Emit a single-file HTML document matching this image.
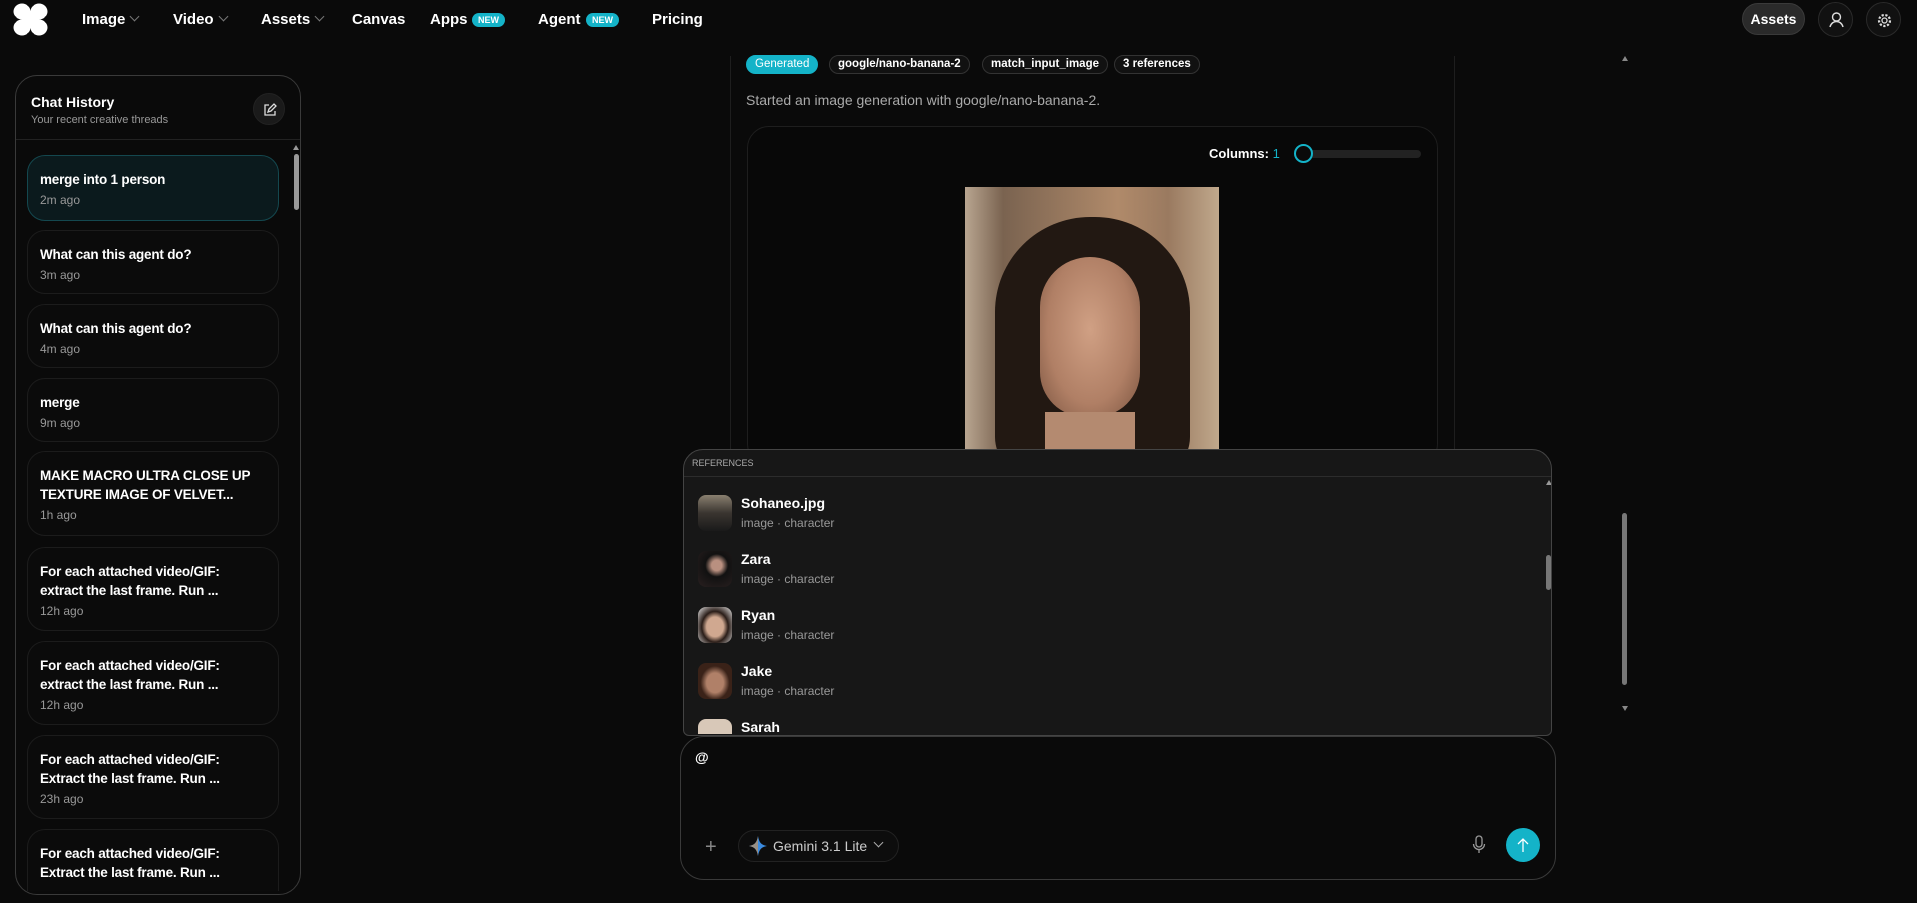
<!DOCTYPE html>
<html><head><meta charset="utf-8"><style>
*{box-sizing:border-box;margin:0;padding:0}
body{width:1917px;height:903px;background:#0a0a0a;font-family:"Liberation Sans",sans-serif;color:#fff;position:relative;overflow:hidden}
.a{position:absolute}
.nav{font-size:15px;font-weight:bold;top:11px}
.chev{display:inline-block;width:7px;height:7px;border-right:1px solid #777;border-bottom:1px solid #777;transform:rotate(45deg);margin-left:6px;position:relative;top:-4px}
.new{background:#14b3c8;color:#fff;font-size:9px;font-weight:bold;border-radius:8px;padding:2px 6px;top:13px}
.item{left:27px;width:252px;border:1px solid #1c1c1c;border-radius:18px;background:#0b0b0b;padding:14px 12px 0 12px}
.item .t{font-size:13.5px;font-weight:bold;line-height:19px;letter-spacing:-0.2px}
.item .s{font-size:12px;color:#999;margin-top:4px}
.tag{top:55px;height:19px;border:1px solid #333;border-radius:10px;font-size:11.5px;font-weight:bold;line-height:17px;padding:0 8px;background:#111}
.ref{left:698px;width:300px;height:40px}
.av{position:absolute;left:0;top:0;width:34px;height:36px;border-radius:8px}
.rn{position:absolute;left:43px;top:0;font-size:14px;font-weight:bold;white-space:nowrap}
.rs{position:absolute;left:43px;top:21px;font-size:12px;color:#999;white-space:nowrap}
</style></head><body>
<svg class="a" style="left:13px;top:3px" width="35" height="33" viewBox="0 0 35 33"><g fill="#fff"><ellipse cx="9" cy="8.5" rx="8.5" ry="8"/><ellipse cx="26" cy="8.5" rx="8.5" ry="8"/><ellipse cx="9" cy="24.5" rx="8.5" ry="8"/><ellipse cx="26" cy="24.5" rx="8.5" ry="8"/><rect x="9" y="8" width="17" height="17"/></g><g fill="#0a0a0a"><circle cx="17.5" cy="0" r="4"/><circle cx="17.5" cy="33" r="4"/><circle cx="0" cy="16.5" r="4"/><circle cx="35" cy="16.5" r="4"/></g></svg>
<div class="a nav" style="left:82px">Image<span class="chev"></span></div>
<div class="a nav" style="left:173px">Video<span class="chev"></span></div>
<div class="a nav" style="left:261px">Assets<span class="chev"></span></div>
<div class="a nav" style="left:352px">Canvas</div>
<div class="a nav" style="left:430px">Apps</div><div class="a new" style="left:472px">NEW</div>
<div class="a nav" style="left:538px">Agent</div><div class="a new" style="left:586px">NEW</div>
<div class="a nav" style="left:652px">Pricing</div>
<div class="a" style="left:1742px;top:3px;width:63px;height:32px;border-radius:16px;background:#2a2a2a;border:1px solid #3a3a3a;font-size:14px;font-weight:bold;text-align:center;line-height:30px">Assets</div>
<div class="a" style="left:1818px;top:2px;width:35px;height:35px;border-radius:50%;border:1px solid #2a2a2a;background:#111"><svg width="35" height="35" viewBox="0 0 35 35"><circle cx="17.5" cy="14" r="4" fill="none" stroke="#ddd" stroke-width="1.4"/><path d="M11 24c1-4 4-5.5 6.5-5.5s5.5 1.5 6.5 5.5" fill="none" stroke="#ddd" stroke-width="1.4"/></svg></div>
<div class="a" style="left:1866px;top:2px;width:35px;height:35px;border-radius:50%;border:1px solid #2a2a2a;background:#111"><svg width="35" height="35" viewBox="0 0 35 35"><circle cx="17.5" cy="17.5" r="2.5" fill="none" stroke="#ddd" stroke-width="1.3"/><circle cx="17.5" cy="17.5" r="5.5" fill="none" stroke="#ddd" stroke-width="2.2" stroke-dasharray="2.2 1.6"/></svg></div>

<div class="a" style="left:15px;top:75px;width:286px;height:820px;border:1.5px solid #3a3a3a;border-radius:22px;background:#0a0a0a;overflow:hidden">
 <div class="a" style="left:15px;top:18px;font-size:14px;font-weight:bold">Chat History</div>
 <div class="a" style="left:15px;top:38px;font-size:11px;color:#999">Your recent creative threads</div>
 <div class="a" style="left:237px;top:17px;width:32px;height:32px;border-radius:50%;background:#1a1a1a;border:1px solid #222"><svg width="32" height="32" viewBox="0 0 32 32"><path d="M15 11h-4v10h10v-4" fill="none" stroke="#ddd" stroke-width="1.3"/><path d="M14 18l1-3 5-5 2 2-5 5z" fill="none" stroke="#ddd" stroke-width="1.3"/></svg></div>
 <div class="a" style="left:0;top:63px;width:286px;height:1px;background:#222"></div>
 <div class="a" style="left:278px;top:78px;width:5px;height:56px;background:#999;border-radius:3px"></div>
 <div class="a" style="left:277px;top:69px;width:0;height:0;border-left:3px solid transparent;border-right:3px solid transparent;border-bottom:5px solid #999"></div>
</div>
<div class="a item" style="top:155px;height:66px;background:#0b1a1d;border-color:#14484f"><div class="t">merge into 1 person</div><div class="s">2m ago</div></div>
<div class="a item" style="top:230px;height:64px"><div class="t">What can this agent do?</div><div class="s">3m ago</div></div>
<div class="a item" style="top:304px;height:64px"><div class="t">What can this agent do?</div><div class="s">4m ago</div></div>
<div class="a item" style="top:378px;height:64px"><div class="t">merge</div><div class="s">9m ago</div></div>
<div class="a item" style="top:451px;height:85px"><div class="t">MAKE MACRO ULTRA CLOSE UP<br>TEXTURE IMAGE OF VELVET...</div><div class="s">1h ago</div></div>
<div class="a item" style="top:547px;height:84px"><div class="t">For each attached video/GIF:<br>extract the last frame. Run ...</div><div class="s">12h ago</div></div>
<div class="a item" style="top:641px;height:84px"><div class="t">For each attached video/GIF:<br>extract the last frame. Run ...</div><div class="s">12h ago</div></div>
<div class="a item" style="top:735px;height:84px"><div class="t">For each attached video/GIF:<br>Extract the last frame. Run ...</div><div class="s">23h ago</div></div>
<div class="a item" style="top:829px;height:62px;border-bottom:none;border-radius:18px 18px 0 0"><div class="t">For each attached video/GIF:<br>Extract the last frame. Run ...</div></div>

<div class="a" style="left:730px;top:56px;width:725px;height:400px;border-left:1px solid #1e1e1e;border-right:1px solid #1e1e1e"></div>
<div class="a tag" style="left:746px;background:#14b3c8;border-color:#14b3c8;font-weight:normal">Generated</div>
<div class="a tag" style="left:829px">google/nano-banana-2</div>
<div class="a tag" style="left:982px">match_input_image</div>
<div class="a tag" style="left:1114px">3 references</div>
<div class="a" style="left:746px;top:92px;font-size:14px;color:#aaa">Started an image generation with google/nano-banana-2.</div>
<div class="a" style="left:747px;top:126px;width:691px;height:340px;border:1px solid #1e1e1e;border-radius:22px;background:#080808"></div>
<div class="a" style="left:1209px;top:146px;font-size:13px;font-weight:bold">Columns: <span style="color:#14b3c8;font-weight:normal">1</span></div>
<div class="a" style="left:1303px;top:150px;width:118px;height:8px;border-radius:4px;background:#222"></div>
<div class="a" style="left:1294px;top:144px;width:19px;height:19px;border-radius:50%;border:2px solid #14b3c8;background:#0a0a0a"></div>
<div class="a" style="left:965px;top:187px;width:254px;height:262px;overflow:hidden;background:linear-gradient(90deg,#b8a590 0%,#7a6350 15%,#b08a6a 60%,#9a7a60 80%,#c0a88c 100%)">
 <div class="a" style="left:30px;top:30px;width:195px;height:260px;border-radius:95px 95px 40px 40px;background:#221812"></div>
 <div class="a" style="left:75px;top:70px;width:100px;height:160px;border-radius:50px 50px 45px 45px;background:radial-gradient(ellipse at 50% 45%,#d0a084 0%,#b07f65 60%,#7a5440 100%)"></div>
 <div class="a" style="left:80px;top:225px;width:90px;height:50px;background:#b48a70"></div>
</div>
<div class="a" style="left:1622px;top:56px;width:0;height:0;border-left:3px solid transparent;border-right:3px solid transparent;border-bottom:5px solid #888"></div>
<div class="a" style="left:1622px;top:513px;width:5px;height:172px;background:#777;border-radius:3px"></div>
<div class="a" style="left:1622px;top:706px;width:0;height:0;border-left:3px solid transparent;border-right:3px solid transparent;border-top:5px solid #888"></div>

<div class="a" style="left:683px;top:449px;width:869px;height:287px;background:#171717;border:1.5px solid #444;border-radius:20px 20px 6px 6px;overflow:hidden">
 <div class="a" style="left:8px;top:8px;font-size:9px;color:#aaa">REFERENCES</div>
 <div class="a" style="left:0;top:26px;width:869px;height:1px;background:#2c2c2c"></div>
 <div class="a" style="left:862px;top:30px;width:0;height:0;border-left:3px solid transparent;border-right:3px solid transparent;border-bottom:5px solid #999"></div>
 <div class="a" style="left:862px;top:105px;width:5px;height:35px;background:#777;border-radius:3px"></div>
</div>
<div class="a ref" style="top:495px"><div class="av" style="background:linear-gradient(#8a8070,#3a3530 50%,#1a1a1a)"></div><div class="rn">Sohaneo.jpg</div><div class="rs">image · character</div></div>
<div class="a ref" style="top:551px"><div class="av" style="background:radial-gradient(circle at 55% 40%,#b99080 0 18%,#111 40%,#2a2020)"></div><div class="rn">Zara</div><div class="rs">image · character</div></div>
<div class="a ref" style="top:607px"><div class="av" style="background:radial-gradient(ellipse at 50% 55%,#d0a890 0 35%,#2a1d18 55%,#eee)"></div><div class="rn">Ryan</div><div class="rs">image · character</div></div>
<div class="a ref" style="top:663px"><div class="av" style="background:radial-gradient(ellipse at 50% 55%,#b08068 0 35%,#3a2218 60%)"></div><div class="rn">Jake</div><div class="rs">image · character</div></div>
<div class="a ref" style="top:719px;height:15px;overflow:hidden;width:200px"><div class="av" style="background:#d8c8b8"></div><div class="rn">Sarah</div></div>

<div class="a" style="left:680px;top:736px;width:876px;height:144px;background:#0a0a0a;border:1.5px solid #3a3a3a;border-radius:24px"></div>
<div class="a" style="left:695px;top:749px;font-size:14px;font-weight:bold">@</div>
<div class="a" style="left:705px;top:836px;font-size:20px;color:#888;font-weight:300">+</div>
<div class="a" style="left:738px;top:830px;width:161px;height:32px;border:1px solid #222;border-radius:16px;background:#0d0d0d"></div>
<svg class="a" style="left:749px;top:836px" width="18" height="20" viewBox="0 0 18 20"><path d="M9 0C10 6 12 9 18 10 12 11 10 14 9 20 8 14 6 11 0 10 6 9 8 6 9 0z" fill="#3b8be0"/><path d="M9 0C8 6 6 9 0 10 6 11 8 14 9 20z" fill="#e8953a" opacity=".55"/></svg>
<div class="a" style="left:773px;top:838px;font-size:14px;color:#ccc">Gemini 3.1 Lite</div>
<div class="a" style="left:875px;top:839px;width:7px;height:7px;border-right:1.3px solid #aaa;border-bottom:1.3px solid #aaa;transform:rotate(45deg)"></div>
<svg class="a" style="left:1472px;top:835px" width="14" height="20" viewBox="0 0 14 20"><rect x="4" y="1" width="6" height="11" rx="3" fill="none" stroke="#999" stroke-width="1.3"/><path d="M1.5 9a5.5 5.5 0 0 0 11 0M7 14.5V18" fill="none" stroke="#999" stroke-width="1.3"/></svg>
<div class="a" style="left:1506px;top:828px;width:34px;height:34px;border-radius:50%;background:#14b3c8"><svg width="34" height="34" viewBox="0 0 34 34"><path d="M17 24V11M12 16l5-5 5 5" fill="none" stroke="#fff" stroke-width="1.3"/></svg></div>
</body></html>
